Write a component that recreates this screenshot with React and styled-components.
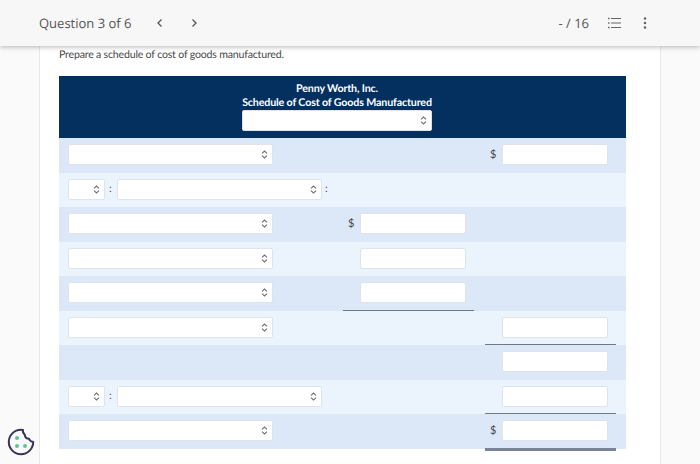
import React from 'react';
import styled, { createGlobalStyle } from 'styled-components';

const GlobalStyle = createGlobalStyle`
  html, body {
    margin: 0;
    padding: 0;
    height: 100%;
    overflow: hidden;
    background: #fafafa;
    font-family: Lato, "Open Sans", sans-serif;
    text-rendering: geometricPrecision;
  }
`;

const Page = styled.div`
  display: flex;
  flex-direction: column;
  height: 464px;
  overflow: hidden;
`;

const Header = styled.header`
  position: relative;
  z-index: 2;
  flex: 0 0 46px;
  display: flex;
  align-items: center;
  padding: 0 53px 0 39px;
  background: #f7f7f7;
  box-shadow: 0 1px 5px rgba(0, 0, 0, 0.28);
  color: #555;
  font-family: "Open Sans", Lato, sans-serif;
  font-size: 13px;
`;

const Title = styled.span`
  width: 92px;
  white-space: nowrap;
  margin-right: 25px;
`;

const NavButton = styled.span`
  display: flex;
  width: 10px;
  margin-right: 24px;
  color: #555;
`;

const Score = styled.span`
  margin-left: auto;
  margin-right: 19px;
`;

const HeaderIcon = styled.span`
  display: flex;
  margin-left: ${(p) => p.$gap || 0}px;
`;

const Card = styled.main`
  position: relative;
  flex: 1;
  margin: 0 39px 0 39px;
  padding: 0 34px 0 19px;
  background: #fff;
  border-left: 1px solid #e8e8e8;
  border-right: 1px solid #e8e8e8;
`;

const Prompt = styled.p`
  margin: 0;
  padding-top: 2px;
  height: 27.5px;
  line-height: 14px;
  font-size: 10.6px;
  letter-spacing: -0.2px;
  color: #4a4a4a;
`;

const TableHead = styled.div`
  display: flex;
  flex-direction: column;
  align-items: center;
  height: 62.5px;
  padding: 6px 11px 0 0;
  box-sizing: border-box;
  background: #03305f;
  color: #fff;
  font-size: 10.7px;
  letter-spacing: -0.15px;
  font-weight: 700;
  line-height: 14px;
`;

const HeadLine = styled.div`
  height: 14px;
`;

const Row = styled.div`
  display: grid;
  grid-template-columns: 284px 142px 141px;
  height: 34.5px;
  background: ${(p) => (p.$odd ? '#dce8f8' : '#ebf3fd')};
`;

const LabelCell = styled.div`
  display: flex;
  align-items: center;
  padding: 0 0 1px 8.5px;
`;

const AmountCell = styled.div`
  position: relative;
  display: flex;
  align-items: flex-start;
  padding: 6px 0 0 16.5px;
  width: 131px;
  box-sizing: border-box;
  border-bottom: ${(p) => (p.$line === 'double' ? '3px solid #7b8494' : p.$line ? '1px solid #6f7a88' : '0 none')};
  height: ${(p) => (p.$line === 'double' ? 'calc(100% + 2px)' : '100%')};
`;

const Dollar = styled.span`
  position: absolute;
  left: 5px;
  top: 9.5px;
  font-size: 11px;
  line-height: 14px;
  color: #444;
`;

const Input = styled.div`
  width: 106px;
  height: 21px;
  background: #fff;
  border: 1px solid #dfe3ea;
  border-radius: 2px;
  box-sizing: border-box;
`;

const SelectBox = styled.div`
  display: flex;
  align-items: center;
  justify-content: flex-end;
  width: ${(p) => p.$width}px;
  height: 21px;
  padding-right: 4px;
  background: #fff;
  border: 1px solid #dfe3ea;
  border-radius: 2px;
  box-sizing: border-box;
  flex-shrink: 0;
`;

const Colon = styled.span`
  width: ${(p) => p.$width}px;
  flex-shrink: 0;
  text-align: center;
  font-size: 11px;
  line-height: 14px;
  color: #555;
`;

const CookieButton = styled.div`
  position: fixed;
  left: 7px;
  bottom: 8px;
  display: flex;
  z-index: 3;
`;

const Arrows = () => (
  <svg width="7" height="9" viewBox="0 0 7 9" fill="none" stroke="#707070" strokeWidth="1.1">
    <path d="M1 3.4 3.500 1 6 3.400M1 5.600 3.500 8 6 5.600" />
  </svg>
);

const Select = ({ width }) => (
  <SelectBox $width={width}>
    <Arrows />
  </SelectBox>
);

const WideSelect = () => <Select width={205} />;

const PairSelect = ({ trailing }) => (
  <>
    <Select width={37} />
    <Colon $width={12}>:</Colon>
    <Select width={205} />
    {trailing && <Colon $width={10}>:</Colon>}
  </>
);

const Amount = ({ dollar, line }) => (
  <AmountCell $line={line}>
    {dollar && <Dollar>$</Dollar>}
    <Input />
  </AmountCell>
);

const rows = [
  { third: { dollar: true } },
  { pair: true, trailing: true },
  { second: { dollar: true } },
  { second: {} },
  { second: { line: 'single' } },
  { third: { line: 'single' } },
  { noLabel: true, third: {} },
  { pair: true, third: { line: 'single' } },
  { third: { dollar: true, line: 'double' } },
];

const App = () => (
  <Page>
    <GlobalStyle />
    <Header>
      <Title>Question 3 of 6</Title>
      <NavButton>
        <svg width="8" height="10" viewBox="0 0 8 10" fill="none" stroke="currentColor" strokeWidth="1.3">
          <path d="M5.500 1.500 2 5l3.500 3.500" />
        </svg>
      </NavButton>
      <NavButton>
        <svg width="8" height="10" viewBox="0 0 8 10" fill="none" stroke="currentColor" strokeWidth="1.3">
          <path d="M2.500 1.500 6 5 2.500 8.500" />
        </svg>
      </NavButton>
      <Score>- / 16</Score>
      <HeaderIcon>
        <svg width="13" height="12" viewBox="0 0 13 12" fill="none" stroke="#666" strokeWidth="1.200">
          <path d="M3 1.500h10M3 6h10M3 10.500h10" />
          <path d="M.8 .7v1.600M.8 5.200v1.600M.8 9.700v1.600" strokeWidth="1.500" />
        </svg>
      </HeaderIcon>
      <HeaderIcon $gap={22}>
        <svg width="4" height="12" viewBox="0 0 4 12" fill="#666">
          <circle cx="2" cy="1.500" r="1.300" />
          <circle cx="2" cy="6" r="1.300" />
          <circle cx="2" cy="10.500" r="1.300" />
        </svg>
      </HeaderIcon>
    </Header>
    <Card>
      <Prompt>Prepare a schedule of cost of goods manufactured.</Prompt>
      <TableHead>
        <HeadLine>Penny Worth, Inc.</HeadLine>
        <HeadLine>Schedule of Cost of Goods Manufactured</HeadLine>
        <Select width={190} />
      </TableHead>
      {rows.map((row, i) => (
        <Row key={i} $odd={i % 2 === 0}>
          <LabelCell>
            {row.pair ? <PairSelect trailing={row.trailing} /> : !row.noLabel && <WideSelect />}
          </LabelCell>
          <div>{row.second && <Amount {...row.second} />}</div>
          <div>{row.third && <Amount {...row.third} />}</div>
        </Row>
      ))}
    </Card>
    <CookieButton>
      <svg width="28" height="28" viewBox="0 0 28 28" fill="none">
        <path
          d="M14 1.800C7.200 1.800 1.800 7.300 1.800 14S7.300 26.200 14 26.200 26.200 20.700 26.200 14c-2-.3-3.600-1.400-4.200-3.200-2.400-.1-4-1.800-4.200-4C16.500 5.500 15.500 3.500 16 2 15.300 1.900 14.700 1.800 14 1.800Z"
          stroke="#3a3358"
          strokeWidth="2"
          strokeLinejoin="round"
        />
        <circle cx="10" cy="10" r="2" fill="#5cc39a" />
        <circle cx="10" cy="18" r="2" fill="#5cc39a" />
        <circle cx="18" cy="18" r="2" fill="#5cc39a" />
      </svg>
    </CookieButton>
  </Page>
);

export default App;
